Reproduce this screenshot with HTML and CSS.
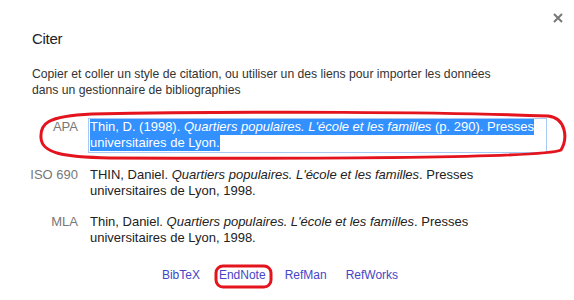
FILE: index.html
```html
<!DOCTYPE html>
<html lang="fr">
<head>
    <meta charset="UTF-8">
    <meta name="viewport" content="width=device-width, initial-scale=1.0">
    <title>Citer</title>
    <link rel="stylesheet" href="styles.css">
</head>
<body>
    <div class="dialog">
        <div class="dialog-top">
            <button class="close" aria-label="Fermer">
                <svg width="10" height="10" viewBox="0 0 10 10">
                    <path d="M1 1 L9 9 M9 1 L1 9" stroke="#777" stroke-width="2" />
                </svg>
            </button>
        </div>
        <h2 class="title">Citer</h2>
        <p class="intro">Copier et coller un style de citation, ou utiliser un des liens pour importer les données dans un gestionnaire de bibliographies</p>

        <div class="citations">
            <div class="row">
                <div class="label">APA</div>
                <div class="text focused"><span class="sel">Thin, D. (1998). <i>Quartiers populaires. L'école et les familles</i> (p. 290). Presses universitaires de Lyon.</span></div>
            </div>
            <div class="row">
                <div class="label">ISO 690</div>
                <div class="text">THIN, Daniel. <i>Quartiers populaires. L'école et les familles</i>. Presses universitaires de Lyon, 1998.</div>
            </div>
            <div class="row">
                <div class="label">MLA</div>
                <div class="text">Thin, Daniel. <i>Quartiers populaires. L'école et les familles</i>. Presses universitaires de Lyon, 1998.</div>
            </div>
        </div>

        <div class="links">
            <a href="#">BibTeX</a>
            <a href="#">EndNote</a>
            <a href="#">RefMan</a>
            <a href="#">RefWorks</a>
        </div>
    </div>

    <!-- hand-drawn red marks over the screenshot -->
    <svg class="marks" width="574" height="300" viewBox="0 0 574 300">
        <path d="M92 114 C250 111 450 112 548 116 C566 118 568 138 561 150 C545 158 350 159 110 158 C62 157 42 153 41 138 C40 124 46 116 92 114 Z"
              fill="none" stroke="#e3141d" stroke-width="3" />
        <rect x="216" y="266" width="55" height="21" rx="7" fill="none" stroke="#e3141d" stroke-width="3" />
    </svg>
</body>
</html>
```

FILE: styles.css
```css
* {
    margin: 0;
    padding: 0;
    box-sizing: border-box;
}

body {
    font-family: 'Liberation Sans', Arial, sans-serif;
    background-color: #fff;
    color: #222;
    width: 574px;
    height: 300px;
    overflow: hidden;
    position: relative;
}

.dialog {
    padding: 0 28px 0 32px;
}

.dialog-top {
    display: flex;
    justify-content: flex-end;
    height: 29px;
    padding-top: 13px;
    margin-right: -17px;
}

.close {
    width: 10px;
    height: 10px;
    border: none;
    background: none;
    cursor: pointer;
    display: block;
}

.close svg {
    display: block;
}

.title {
    font-size: 15px;
    letter-spacing: -0.3px;
    font-weight: normal;
    line-height: 20px;
    color: #222;
}

.intro {
    font-size: 12.2px;
    line-height: 16px;
    margin-top: 17px;
    max-width: 466px;
    color: #333;
}

.citations {
    margin-top: 21px;
    margin-left: -2px;
}

.row {
    display: grid;
    grid-template-columns: 48px 1fr;
    column-gap: 11px;
    margin-bottom: 15px;
    font-size: 13px;
    line-height: 16px;
}

.label {
    text-align: right;
    white-space: nowrap;
    color: #777;
}

.text {
    padding: 0 1px;
}

.focused {
    outline: 1px solid #a9c9f5;
    outline-offset: 0;
    height: 33px;
}

.sel {
    background-color: #3390ff;
    color: #fff;
    padding: 1px 0;
}

.links {
    display: flex;
    justify-content: center;
    gap: 19px;
    padding-right: 18px;
    margin-top: 21px;
    font-size: 12px;
    line-height: 16px;
}

.links a {
    color: #4646c6;
    text-decoration: none;
}

.marks {
    position: absolute;
    left: 0;
    top: 0;
    pointer-events: none;
}
```
